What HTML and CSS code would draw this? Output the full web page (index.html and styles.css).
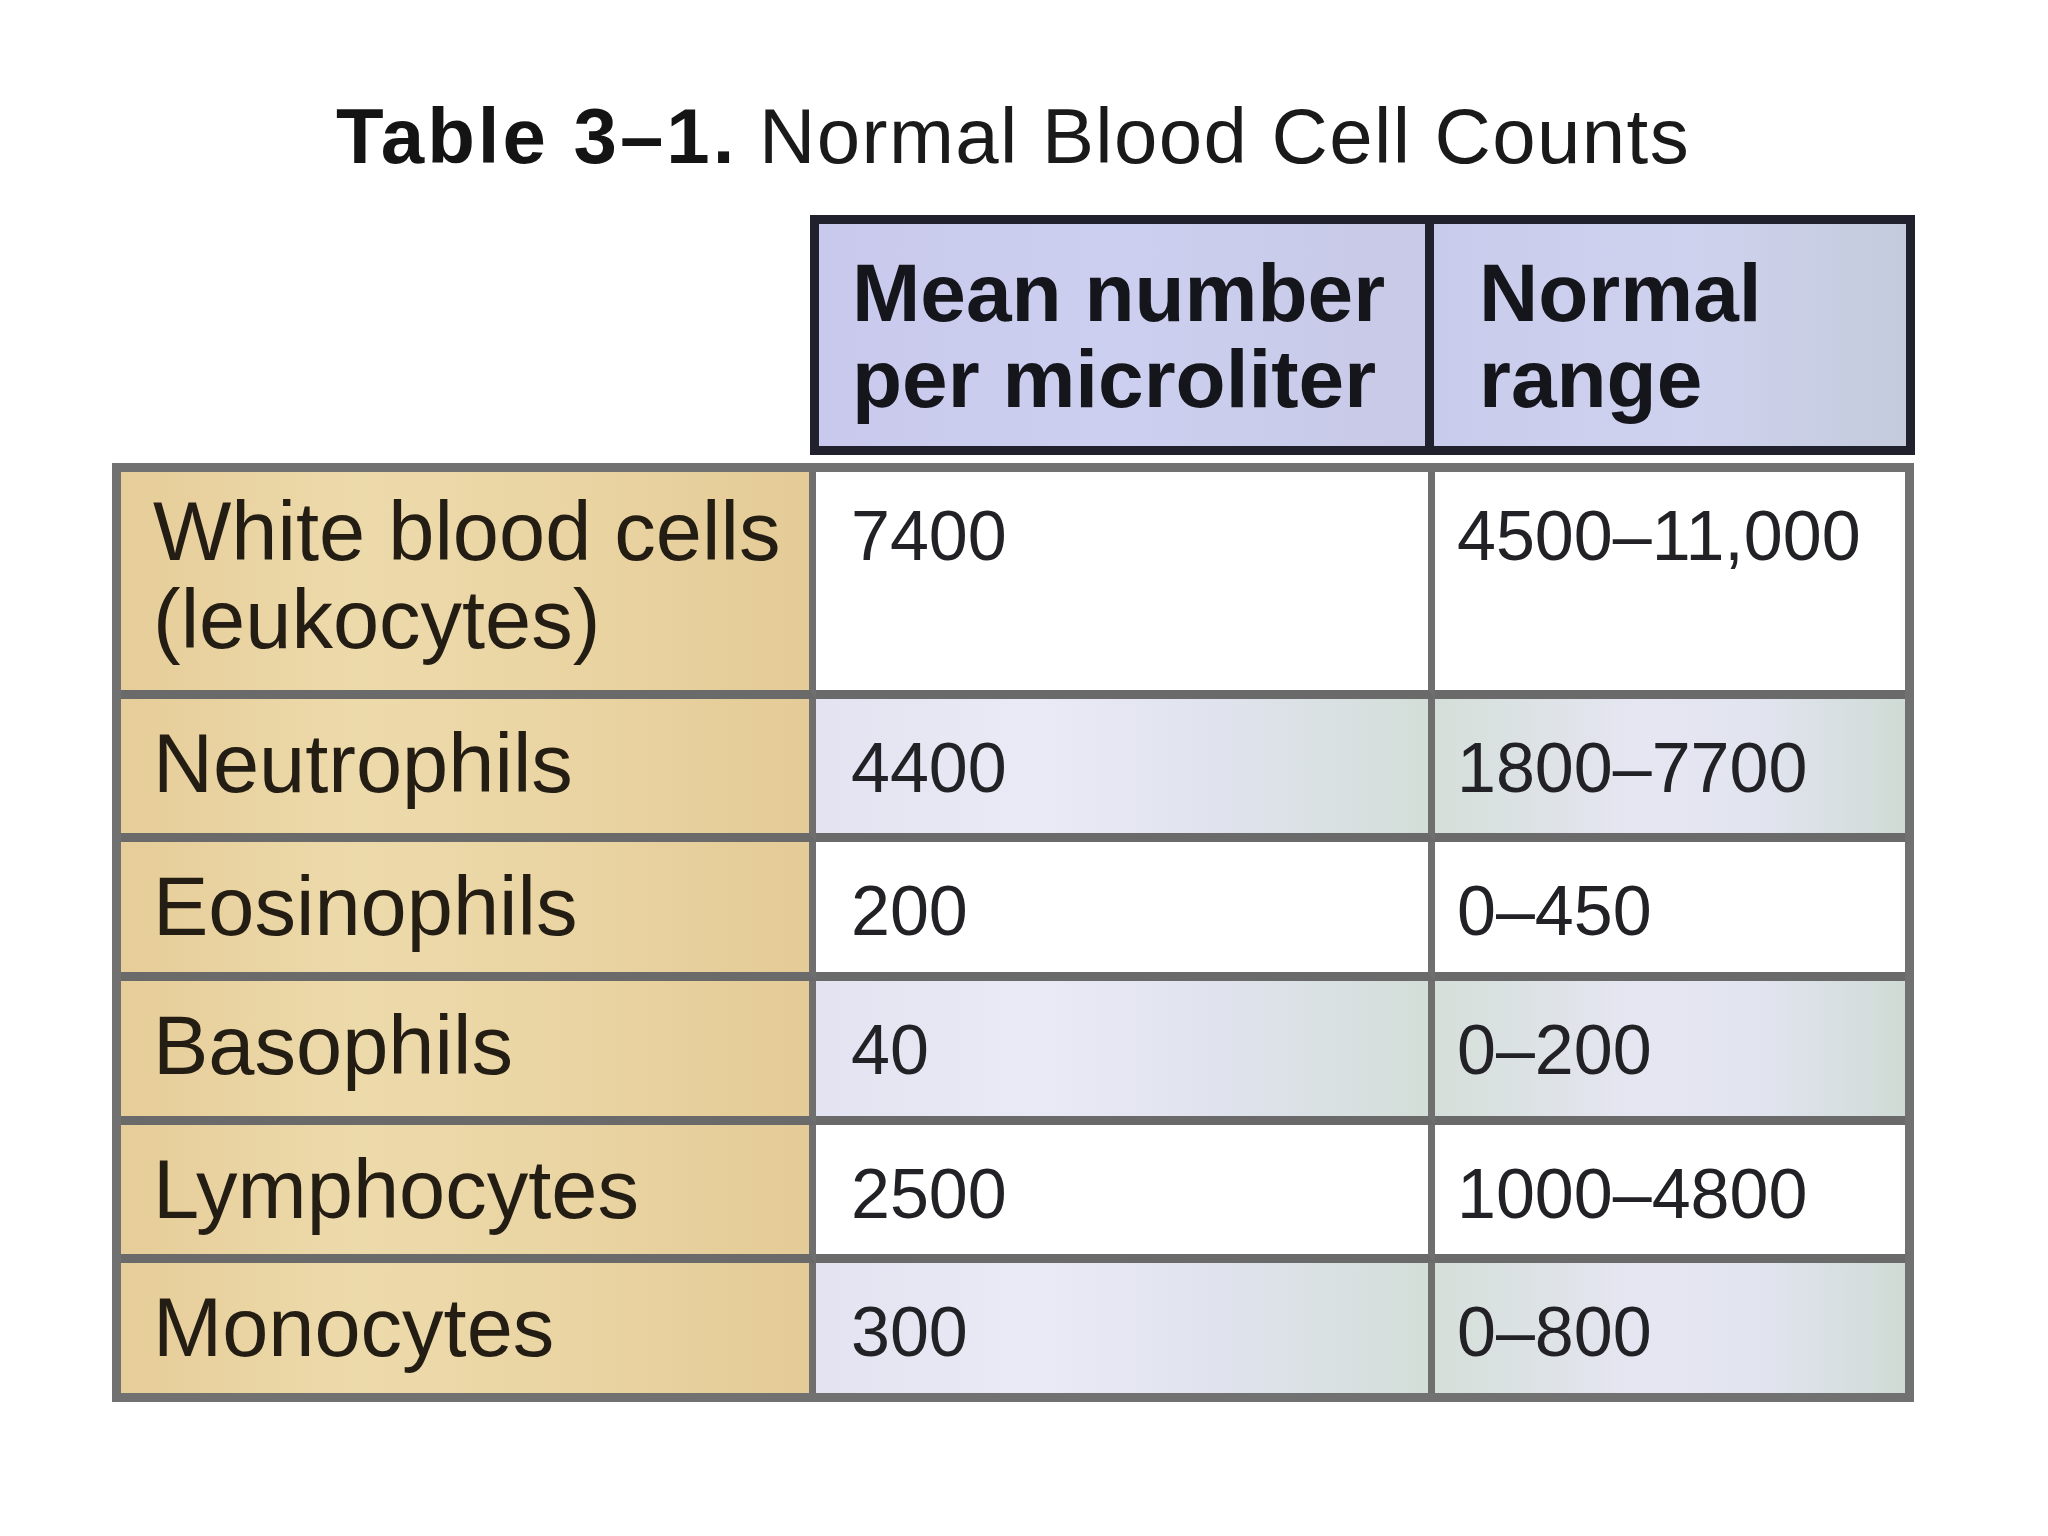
FILE: index.html
```html
<!DOCTYPE html>
<html lang="en">
<head>
<meta charset="utf-8">
<title>Table 3–1. Normal Blood Cell Counts</title>
<link rel="stylesheet" href="styles.css">
</head>
<body>
<div class="page">
  <h1 class="title"><span class="title-num">Table 3–1.</span> <span class="title-text">Normal Blood Cell Counts</span></h1>

  <div class="head">
    <div class="hcell hcell-mean">Mean number<br>per microliter</div>
    <div class="hcell hcell-range">Normal<br>range</div>
  </div>

  <div class="grid">
    <div class="cell name row-first">White blood cells<br>(leukocytes)</div>
    <div class="cell num mean row-first">7400</div>
    <div class="cell num range row-first">4500–11,000</div>

    <div class="cell name">Neutrophils</div>
    <div class="cell num mean shade">4400</div>
    <div class="cell num range shade">1800–7700</div>

    <div class="cell name">Eosinophils</div>
    <div class="cell num mean">200</div>
    <div class="cell num range">0–450</div>

    <div class="cell name">Basophils</div>
    <div class="cell num mean shade">40</div>
    <div class="cell num range shade">0–200</div>

    <div class="cell name">Lymphocytes</div>
    <div class="cell num mean">2500</div>
    <div class="cell num range">1000–4800</div>

    <div class="cell name last">Monocytes</div>
    <div class="cell num mean shade last">300</div>
    <div class="cell num range shade last">0–800</div>
  </div>
</div>
</body>
</html>
```

FILE: styles.css
```css
html, body {
  margin: 0;
  padding: 0;
  background: #ffffff;
}

body {
  font-family: "Liberation Sans", Arial, sans-serif;
  color: #1c1c1c;
}

.page {
  width: 1802px;
  padding: 91px 0 0 112px;
}

.title {
  margin: 0;
  font-size: 78px;
  line-height: 90px;
  text-align: center;
  font-weight: normal;
  color: #1a1a1a;
}

.title-num {
  font-weight: bold;
  letter-spacing: 3px;
  color: #141414;
}

.title-text {
  letter-spacing: 1.4px;
}

.head {
  margin: 34px 0 0 698px;
  width: 1105px;
  box-sizing: border-box;
  border: 9px solid #20212c;
  display: grid;
  grid-template-columns: 615px 1fr;
  background: #c9cbeb;
}

.hcell {
  font-weight: bold;
  font-size: 82px;
  line-height: 86px;
  padding: 26px 0 24px 0;
  color: #15151c;
}

.hcell-mean {
  border-right: 9px solid #20212c;
  padding-left: 33px;
  background: linear-gradient(90deg, #c8c9ec 0%, #cdcff0 50%, #c7c9e6 100%);
}

.hcell-range {
  padding-left: 45px;
  background: linear-gradient(90deg, #c9cbec 0%, #cfd2ee 55%, #c3cbdc 100%);
}

.grid {
  margin-top: 8px;
  width: 1802px;
  box-sizing: border-box;
  border: 9px solid #717171;
  display: grid;
  grid-template-columns: 695px 619px 1fr;
  grid-template-rows: 227px 143px 139px 144px 138px 130px;
}

.cell {
  box-sizing: border-box;
  border-bottom: 9px solid #6a6a6a;
  padding: 21px 0 0 0;
  line-height: 88px;
}

.cell.last {
  border-bottom: none;
}

.cell.row-first {
  padding-top: 16px;
}

.name {
  font-size: 83px;
  padding-left: 32px;
  border-right: 7px solid #6f6f6f;
  color: #231d14;
  background: linear-gradient(90deg, #e6cd99 0%, #eddaab 35%, #e9d3a1 70%, #e4cb97 100%);
}

.num {
  font-size: 70px;
  color: #222226;
  background: #ffffff;
  padding-top: 25px;
}

.num.row-first {
  padding-top: 20px;
}

.mean {
  padding-left: 35px;
  border-right: 7px solid #6f6f6f;
}

.range {
  padding-left: 22px;
}

.mean.shade {
  background: linear-gradient(90deg, #e3e3f1 0%, #eaeaf6 35%, #e0e3ee 65%, #d3ded8 100%);
}

.range.shade {
  background: linear-gradient(90deg, #d5dfd9 0%, #e6e6f3 45%, #e1e4ef 70%, #cfdbd5 100%);
}
```
